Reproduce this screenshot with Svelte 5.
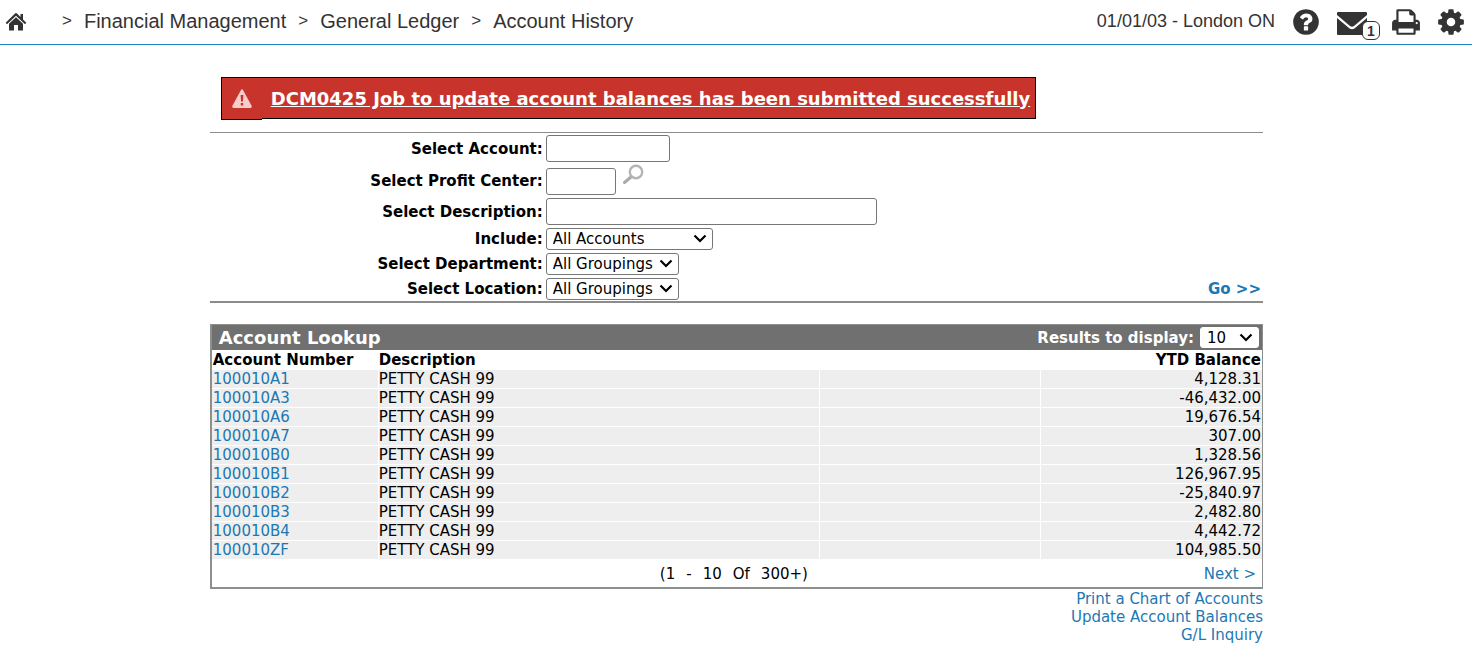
<script>
    // Breadcrumb
    const crumbs = ["Financial Management", "General Ledger", "Account History"];

    const accounts = [
        { number: "100010A1", description: "PETTY CASH 99", balance: "4,128.31" },
        { number: "100010A3", description: "PETTY CASH 99", balance: "-46,432.00" },
        { number: "100010A6", description: "PETTY CASH 99", balance: "19,676.54" },
        { number: "100010A7", description: "PETTY CASH 99", balance: "307.00" },
        { number: "100010B0", description: "PETTY CASH 99", balance: "1,328.56" },
        { number: "100010B1", description: "PETTY CASH 99", balance: "126,967.95" },
        { number: "100010B2", description: "PETTY CASH 99", balance: "-25,840.97" },
        { number: "100010B3", description: "PETTY CASH 99", balance: "2,482.80" },
        { number: "100010B4", description: "PETTY CASH 99", balance: "4,442.72" },
        { number: "100010ZF", description: "PETTY CASH 99", balance: "104,985.50" },
    ];

    const actions = ["Print a Chart of Accounts", "Update Account Balances", "G/L Inquiry"];

    let account = $state("");
    let profitCenter = $state("");
    let description = $state("");
    let include = $state("All Accounts");
    let department = $state("All Groupings");
    let location = $state("All Groupings");
    let pageSize = $state("10");
</script>

<header class="topbar">
    <nav class="breadcrumb" aria-label="Breadcrumb">
        <a class="home" href="#home" aria-label="Home">
            <svg width="22" height="18" viewBox="0 0 22 18">
                <path d="M11 0Q11.500 0 12 .5L15.500 4V1H18V6.500L21.300 9.800L20 11.200L11 2.700L2 11.200L.7 9.800L10 .5Q10.500 0 11 0Z" />
                <path d="M11 4.200L18 10.800V17.500H13V12H9V17.500H4V10.800Z" />
            </svg>
        </a>
        {#each crumbs as crumb}
            <span class="sep">&gt;</span>
            <a href="#crumb">{crumb}</a>
        {/each}
    </nav>

    <div class="tools">
        <span class="session">01/01/03 - London ON</span>
        <button class="tool help" aria-label="Help">
            <svg width="30" height="30" viewBox="0 0 1792 1792">
                <path d="M1024 1376v-192q0-14-9-23t-23-9h-192q-14 0-23 9t-9 23v192q0 14 9 23t23 9h192q14 0 23-9t9-23zm256-672q0-88-55.5-163t-138.5-116-170-41q-243 0-371 213-15 24 8 42l132 100q7 6 19 6 16 0 25-12 53-68 86-92 34-24 86-24 48 0 85.5 26t37.5 59q0 38-20 61t-68 45q-63 28-115.5 86.5t-52.5 125.5v36q0 14 9 23t23 9h192q14 0 23-9t9-23q0-19 21.5-49.5t54.5-49.5q32-18 49-28.5t46-35 44.5-48 28-60.5 12.5-81zm384 192q0 209-103 385.5t-279.5 279.5-385.5 103-385.5-103-279.5-279.5-103-385.5 103-385.5 279.5-279.5 385.5-103 385.5 103 279.5 279.5 103 385.5z" />
            </svg>
        </button>
        <button class="tool mail" aria-label="Messages">
            <svg width="30" height="24" viewBox="0 0 30 24">
                <path d="M1 0H29Q30 0 30 1V3L17 14Q15 15.500 13 14L0 3V1Q0 0 1 0Z" />
                <path d="M0 6L12 16Q15 18.500 18 16L30 6V22Q30 23 29 23H1Q0 23 0 22Z" />
            </svg>
            <span class="badge">1</span>
        </button>
        <button class="tool print" aria-label="Print">
            <svg width="30" height="30" viewBox="0 0 1792 1792">
                <path d="M448 1536h896v-256h-896v256zm0-640h896v-384h-160q-40 0-68-28t-28-68v-160h-640v640zm1152 64q0-26-19-45t-45-19-45 19-19 45 19 45 45 19 45-19 19-45zm128 0v416q0 13-9.5 22.5t-22.5 9.5h-224v160q0 40-28 68t-68 28h-960q-40 0-68-28t-28-68v-160h-224q-13 0-22.500-9.500t-9.500-22.500v-416q0-79 56.500-135.500t135.500-56.500h64v-544q0-40 28-68t68-28h672q40 0 88 20t76 48l152 152q28 28 48 76t20 88v256h64q79 0 135.500 56.500t56.500 135.500z" />
            </svg>
        </button>
        <button class="tool settings" aria-label="Settings">
            <svg width="30" height="30" viewBox="0 0 1792 1792">
                <path d="M1152 896q0-106-75-181t-181-75-181 75-75 181 75 181 181 75 181-75 75-181zm512-109v222q0 12-8 23t-20 13l-185 28q-19 54-39 91 35 50 107 138 10 12 10 25t-9 23q-27 37-99 108t-94 71q-12 0-26-9l-138-108q-44 23-91 38-16 136-29 186-7 28-36 28h-222q-14 0-24.5-8.5t-11.5-21.5l-28-184q-49-16-90-37l-141 107q-10 9-25 9-14 0-25-11-126-114-165-168-7-10-7-23 0-12 8-23 15-21 51-66.5t54-70.5q-27-50-41-99l-183-27q-13-2-21-12.5t-8-23.5v-222q0-12 8-23t19-13l186-28q14-46 39-92-40-57-107-138-10-12-10-24 0-10 9-23 26-36 98.5-107.5t94.5-71.5q13 0 26 10l138 107q44-23 91-38 16-136 29-186 7-28 36-28h222q14 0 24.5 8.5t11.5 21.5l28 184q49 16 90 37l142-107q9-9 24-9 13 0 25 10 129 119 165 170 7 8 7 22 0 12-8 23-15 21-51 66.5t-54 70.5q26 50 41 98l183 28q13 2 21 12.5t8 23.5z" />
            </svg>
        </button>
    </div>
</header>

<main>
    <div class="alert" role="alert">
        <span class="alert-icon">
            <svg width="20" height="19" viewBox="0 0 20 19">
                <path d="M9 1Q10-.5 11 1L19.700 17Q20 19 18.500 19H1.500Q0 19 .3 17Z" fill="#f6cdca" />
                <path d="M8.600 6h2.800l-.5 6.500H9.100zM8.800 14h2.400v2.400H8.800z" fill="#c8342b" />
            </svg>
        </span>
        <span class="alert-text">
            <a href="#job">DCM0425 Job to update account balances has been submitted successfully</a>
        </span>
    </div>

    <form class="filters" onsubmit={(e) => e.preventDefault()}>
        <div class="field account">
            <label for="account">Select Account:</label>
            <input id="account" class="w-account" type="text" bind:value={account} />
        </div>
        <div class="field profit">
            <label for="profit">Select Profit Center:</label>
            <input id="profit" class="w-profit" type="text" bind:value={profitCenter} />
            <button class="lookup" type="button" aria-label="Look up profit center">
                <svg width="22" height="22" viewBox="0 0 22 22" fill="none">
                    <path d="M9 13L2.500 18.500" stroke="#aaa" stroke-width="3" stroke-linecap="round" />
                    <circle cx="14" cy="8" r="6.200" stroke="#b4b4b4" stroke-width="2.400" />
                </svg>
            </button>
        </div>
        <div class="field description">
            <label for="description">Select Description:</label>
            <input id="description" class="w-description" type="text" bind:value={description} />
        </div>
        <div class="field">
            <label for="include">Include:</label>
            <select id="include" class="w-include" bind:value={include}>
                <option>All Accounts</option>
            </select>
        </div>
        <div class="field">
            <label for="department">Select Department:</label>
            <select id="department" class="w-group" bind:value={department}>
                <option>All Groupings</option>
            </select>
        </div>
        <div class="field">
            <label for="location">Select Location:</label>
            <select id="location" class="w-group" bind:value={location}>
                <option>All Groupings</option>
            </select>
            <button class="go" type="submit">Go &gt;&gt;</button>
        </div>
    </form>

    <section class="results">
        <div class="results-head">
            <h2>Account Lookup</h2>
            <label for="page-size">Results to display:</label>
            <select id="page-size" bind:value={pageSize}>
                <option>10</option>
            </select>
        </div>
        <table>
            <thead>
                <tr>
                    <th class="col-number">Account Number</th>
                    <th class="col-description">Description</th>
                    <th class="col-blank"></th>
                    <th>YTD Balance</th>
                </tr>
            </thead>
            <tbody>
                {#each accounts as row}
                    <tr>
                        <td><a href="#account">{row.number}</a></td>
                        <td>{row.description}</td>
                        <td></td>
                        <td>{row.balance}</td>
                    </tr>
                {/each}
            </tbody>
        </table>
        <div class="pager">
            <div class="range">
                <span>(1</span>
                <span>-</span>
                <span>10</span>
                <span>Of</span>
                <span>300+)</span>
            </div>
            <a href="#next">Next &gt;</a>
        </div>
    </section>

    <div class="actions">
        {#each actions as action}
            <a href="#action">{action}</a>
        {/each}
    </div>
</main>

<style>
    :global(body) {
        background: #fff;
        color: #000;
        font-family: Verdana, "DejaVu Sans", sans-serif;
        font-size: 15px;
    }

    a {
        color: #1c78b4;
        text-decoration: none;
    }

    button {
        border: 0;
        padding: 0;
        background: none;
        font: inherit;
        cursor: pointer;
    }

    svg {
        display: block;
    }

    .topbar {
        display: flex;
        justify-content: space-between;
        height: 44px;
        border-bottom: 1px solid #1c82c0;
        font-family: Arial, "Liberation Sans", sans-serif;
        color: #333;
    }

    .breadcrumb {
        display: flex;
        align-items: center;
        height: 42px;
        padding-left: 5px;
        font-size: 20px;
    }

    .breadcrumb a {
        color: #333;
    }

    .breadcrumb .home {
        margin-right: 23px;
        padding-top: 1px;
    }

    .home svg,
    .tool svg {
        fill: #333;
    }

    .sep {
        margin: 0 12px;
        font-size: 17px;
    }

    .tools {
        display: flex;
        align-items: center;
        height: 44px;
        padding-right: 6px;
    }

    .session {
        margin-right: 16px;
        padding-bottom: 2px;
        font-size: 18px;
    }

    .mail {
        position: relative;
        margin: 0 24px 0 16px;
        padding-top: 4px;
    }

    .badge {
        position: absolute;
        left: 25px;
        top: 13px;
        box-sizing: border-box;
        width: 18px;
        height: 19px;
        border: 1px solid #333;
        border-radius: 6px;
        background: #fff;
        color: #333;
        font-size: 14px;
        font-weight: bold;
        line-height: 19px;
        text-align: center;
    }

    .print {
        margin-right: 15px;
    }

    main {
        margin: 32px 14.2% 0 14.25%;
    }

    /* The icon cell hangs one pixel below the message cell */
    .alert {
        display: flex;
        align-items: flex-start;
        margin: 0 0 12px 11px;
        font-size: 18px;
        font-weight: bold;
    }

    .alert-icon,
    .alert-text {
        display: flex;
        align-items: center;
        height: 40px;
        border: solid #000;
        background: #c8342b;
    }

    .alert-icon {
        height: 41px;
        padding: 0 10px;
        border-width: 1px 0 1px 1px;
    }

    .alert-text {
        padding: 0 5px 0 9px;
        border-width: 1px 1px 1px 0;
    }

    .alert a {
        color: #fff;
        text-decoration: underline;
    }

    .filters {
        border-top: 1px solid #8c8c8c;
        border-bottom: 2px solid #8c8c8c;
    }

    .field {
        display: flex;
        align-items: center;
        height: 25px;
    }

    .field.account {
        height: 31px;
    }

    .field.profit {
        height: 34px;
    }

    .field.description {
        height: 27px;
        margin-bottom: 1px;
    }

    .field label {
        width: 333px;
        margin-right: 3px;
        font-weight: bold;
        text-align: right;
    }

    input,
    select {
        box-sizing: border-box;
        border: 1px solid #767676;
        border-radius: 3px;
        background: #fff;
        color: #000;
        font: inherit;
    }

    input {
        height: 27px;
    }

    select {
        height: 22px;
        padding: 0 0 0 6px;
        appearance: none;
        background: #fff url("data:image/svg+xml,%3Csvg xmlns='http://www.w3.org/2000/svg' width='14' height='9' viewBox='0 0 14 9'%3E%3Cpath d='M1.500 1.500L7 7L12.500 1.500' fill='none' stroke='%23000' stroke-width='2.200'/%3E%3C/svg%3E") no-repeat right 5px center;
    }

    .w-account {
        width: 124px;
    }

    .w-profit {
        width: 70px;
    }

    .w-description {
        width: 331px;
    }

    .w-include {
        width: 167px;
    }

    .w-group {
        width: 133px;
    }

    .lookup {
        align-self: flex-start;
        margin-left: 6px;
    }

    .go {
        margin-left: auto;
        padding-right: 2px;
        color: #1c78b4;
        font-weight: bold;
    }

    .results {
        margin-top: 21px;
        border: solid #8c8f8c;
        border-width: 1px 1px 2px 2px;
    }

    .results-head {
        display: flex;
        align-items: center;
        height: 25px;
        padding: 0 3px 0 7px;
        background: #707070;
        color: #fff;
        font-weight: bold;
    }

    .results-head h2 {
        flex: 1;
        margin: 0;
        font-size: 18px;
    }

    .results-head select {
        width: 59px;
        height: 21px;
        margin-left: 6px;
        border-color: #fff;
        font-weight: normal;
    }

    table {
        width: 100%;
        table-layout: fixed;
        border-collapse: collapse;
    }

    th,
    td {
        padding: 1px 1px 0 0;
        border-bottom: 1px solid #fff;
        border-right: 1px solid #fff;
        line-height: 17px;
        text-align: left;
    }

    th {
        padding-top: 2px;
    }

    td {
        background: #eee;
    }

    th:first-child,
    td:first-child {
        padding-left: 1px;
    }

    th:last-child,
    td:last-child {
        border-right: 0;
        text-align: right;
    }

    .col-number {
        width: 164px;
    }

    .col-description {
        width: 41.8%;
    }

    .col-blank {
        width: 20.9%;
    }

    .pager {
        display: grid;
        grid-template-columns: 1fr auto 1fr;
        align-items: center;
        height: 27px;
        padding-right: 6px;
    }

    .range {
        display: flex;
        grid-column: 2;
        gap: 11px;
    }

    .pager a {
        text-align: right;
    }

    .actions {
        display: flex;
        flex-direction: column;
        align-items: flex-end;
        padding-top: 1px;
        line-height: 18px;
    }
</style>
